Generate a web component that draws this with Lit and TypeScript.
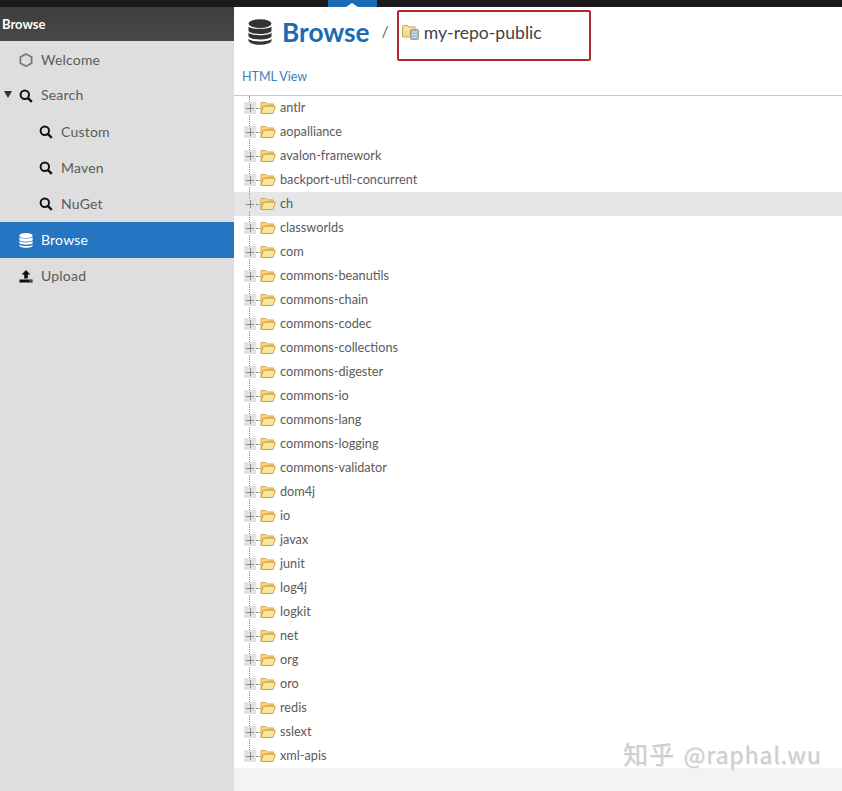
import { LitElement, html, css, svg } from "lit";
import { customElement } from "lit/decorators.js";

const FOLDERS = [
  "antlr", "aopalliance", "avalon-framework", "backport-util-concurrent", "ch",
  "classworlds", "com", "commons-beanutils", "commons-chain", "commons-codec",
  "commons-collections", "commons-digester", "commons-io", "commons-lang",
  "commons-logging", "commons-validator", "dom4j", "io", "javax", "junit",
  "log4j", "logkit", "net", "org", "oro", "redis", "sslext", "xml-apis",
];

const searchIcon = svg`<svg class="ico" viewBox="0 0 14 14" width="14" height="14">
  <circle cx="5.8" cy="5.8" r="4.2" fill="none" stroke="#111" stroke-width="2"/>
  <path d="M8.8 8.8L12.8 12.8" stroke="#111" stroke-width="2.4"/>
</svg>`;

const hexIcon = svg`<svg class="ico" viewBox="0 0 14 14" width="14" height="14">
  <path d="M7 1L12.6 4v6.2L7 13.2 1.4 10.2V4z" fill="none" stroke="#777" stroke-width="1.7"/>
</svg>`;

const dbIcon = (color: string, w: number, h: number) => svg`<svg class="ico" viewBox="0 0 24 26" width=${w} height=${h}>
  <ellipse cx="12" cy="4.6" rx="11.5" ry="4.4" fill=${color}/>
  <path d="M.5 7.4C3 10.6 21 10.6 23.500 7.400V12C21 16 3 16 .5 12z" fill=${color}/>
  <path d="M.5 14.2C3 17.800 21 17.800 23.500 14.200V18C21 22 3 22 .5 18z" fill=${color} transform="translate(0 -.6)"/>
  <path d="M.5 19.800C3 23.400 21 23.400 23.500 19.800V22C21 27 3 27 .5 22z" fill=${color}/>
</svg>`;

const uploadIcon = svg`<svg class="ico" viewBox="0 0 14 14" width="14" height="14">
  <path d="M7 1L11.400 5.400H8.800V9.500H5.200V5.400H2.600z" fill="#111"/>
  <path d="M.5 10.500H13.500V13.500H.5z" fill="#111"/>
  <path d="M10.500 11.500H12.500V12.300H10.500z" fill="#ddd"/>
</svg>`;

const folderIcon = svg`<svg class="folder" viewBox="0 0 16 14" width="16" height="14">
  <path d="M1 2.500Q1 1.500 2 1.500H6L7.500 3H13.500V5H3.500L1 12z" fill="#f8d885" stroke="#d0a543" stroke-width="1"/>
  <path d="M3.500 5.200H15.300L13 12.500H1z" fill="#fde394" stroke="#d0a543" stroke-width="1"/>
</svg>`;

const repoIcon = svg`<svg viewBox="0 0 17 16" width="17" height="16">
  <path d="M.5 2.500Q.5 1.500 1.500 1.500H5.500L7 3H13V13H.5z" fill="#f6dc8e" stroke="#cfa84f"/>
  <path d="M2.500 5H13" stroke="#fff3c4"/>
  <rect x="8.500" y="5.500" width="8" height="10" rx="1" fill="#a9b4bb" stroke="#7f8b92" stroke-width=".7"/>
  <path d="M9.800 8H15.200M9.800 10.500H15.200M9.800 13H15.200" stroke="#e8edf0" stroke-width=".9"/>
</svg>`;

@customElement("app-root")
export class AppRoot extends LitElement {
  static styles = css`
    :host {
      display: block;
      width: 842px;
      height: 791px;
      overflow: hidden;
      position: relative;
      font-family: Lato, "Liberation Sans", sans-serif;
      background: #f3f3f3;
    }
    .topbar {
      height: 7px;
      background: #1b1b1b;
      position: relative;
    }
    .tab {
      position: absolute;
      left: 328px;
      top: 0;
      width: 49px;
      height: 7px;
      background: #1a6bb3;
    }
    .tab::after {
      content: "";
      position: absolute;
      left: 18px;
      bottom: 0;
      border: 6px solid transparent;
      border-top: 0;
      border-bottom: 4px solid #fff;
    }
    .body {
      display: flex;
      height: 784px;
    }
    .side {
      width: 234px;
      flex: none;
      background: #dedede;
    }
    .side-head {
      height: 34px;
      background: linear-gradient(#3e3e3e, #484848);
      color: #fff;
      font-size: 13px;
      font-weight: 700;
      line-height: 35px;
      padding-left: 2px;
      margin-bottom: 1px;
    }
    .nav {
      display: flex;
      align-items: center;
      height: 36px;
      box-sizing: border-box;
      padding-bottom: 2px;
      font-size: 14px;
      letter-spacing: 0.2px;
      color: #5a5a5a;
      padding-left: 19px;
    }
    .nav .ico {
      margin: 2px 8px 0 0;
      flex: none;
    }
    .nav.sub {
      padding-left: 39px;
    }
    .nav.parent {
      padding-left: 4px;
      padding-bottom: 3px;
    }
    .nav.on {
      background: #2475c2;
      color: #fff;
    }
    .caret {
      width: 0;
      height: 0;
      border: 4.500px solid transparent;
      border-top: 7px solid #333;
      border-bottom: 0;
      margin-right: 7px;
    }
    .main {
      flex: 1;
      display: flex;
      flex-direction: column;
    }
    .panel {
      height: 761px;
      background: #fff;
      display: flex;
      flex-direction: column;
    }
    .title {
      height: 53px;
      box-sizing: border-box;
      display: flex;
      align-items: center;
      padding: 0 0 3px 14px;
    }
    .title h1 {
      margin: 0 0 0 10px;
      font-size: 26.200px;
      font-weight: 700;
      color: #1a6bb3;
      font-family: Lato, "Liberation Sans", sans-serif;
    }
    .slash {
      margin-left: 12px;
      color: #666;
      font-size: 16px;
      margin-bottom: 3px;
    }
    .repo {
      display: flex;
      align-items: center;
      margin-left: 13px;
      font-size: 17.600px;
      color: #444;
    }
    .repo svg {
      margin-right: 5px;
    }
    .links {
      height: 36px;
      box-sizing: border-box;
      padding: 9px 0 0 8px;
      border-bottom: 1px solid #c8c8c8;
      font-size: 12.500px;
      color: #3a80bc;
    }
    .tree {
      position: relative;
    }
    .row {
      display: flex;
      align-items: center;
      height: 24px;
      padding-left: 10px;
      font-size: 12.700px;
      color: #5a5a5a;
    }
    .row.hot {
      background: #e6e6e6;
    }
    .label {
      margin-bottom: 2px;
    }
    .plus {
      width: 12px;
      height: 12px;
      background: #e2e2e2;
      position: relative;
      flex: none;
    }
    .plus::before,
    .plus::after {
      content: "";
      position: absolute;
      background: #8a8a8a;
    }
    .plus::before {
      left: 2px;
      right: 2px;
      top: 5.500px;
      height: 1px;
    }
    .plus::after {
      top: 2px;
      bottom: 2px;
      left: 5.500px;
      width: 1px;
    }
    .dots {
      width: 4px;
      flex: none;
      border-top: 1px dotted #888;
    }
    .folder {
      flex: none;
      margin: 0 4px 1px 0;
    }
    .vline {
      position: absolute;
      left: 15px;
      top: 0;
      height: 660px;
      border-left: 1px dotted #888;
    }
    .mark {
      position: absolute;
      left: 623px;
      top: 735px;
      font-family: "Noto Sans CJK SC", "Open Sans", sans-serif;
      font-size: 25px;
      letter-spacing: 1px;
      color: #cdcdcd;
      text-shadow: 1px 1px 0 #ececec;
      white-space: nowrap;
    }
    .mark span {
      font-size: 23px;
      letter-spacing: 0.9px;
      margin-left: 2px;
    }
    .callout {
      position: absolute;
      left: 397px;
      top: 10px;
      width: 194px;
      height: 51px;
      box-sizing: border-box;
      border: 2px solid #b3282c;
      border-radius: 2px;
    }
  `;

  render() {
    return html`
      <div class="topbar"><div class="tab"></div></div>
      <div class="body">
        <aside class="side">
          <div class="side-head">Browse</div>
          <div class="nav">${hexIcon}Welcome</div>
          <div class="nav parent"><span class="caret"></span>${searchIcon}Search</div>
          <div class="nav sub">${searchIcon}Custom</div>
          <div class="nav sub">${searchIcon}Maven</div>
          <div class="nav sub">${searchIcon}NuGet</div>
          <div class="nav on">${dbIcon("#fff", 14, 15)}Browse</div>
          <div class="nav">${uploadIcon}Upload</div>
        </aside>
        <div class="main">
          <div class="panel">
            <div class="title">
              ${dbIcon("#333", 24, 26)}
              <h1>Browse</h1>
              <span class="slash">/</span>
              <span class="repo">${repoIcon}my-repo-public</span>
            </div>
            <div class="links">HTML View</div>
            <div class="tree">
              <div class="vline"></div>
              ${FOLDERS.map(
                (name) => html`<div class="row ${name === "ch" ? "hot" : ""}">
                  <span class="plus"></span><span class="dots"></span>${folderIcon}<span class="label">${name}</span>
                </div>`
              )}
            </div>
          </div>
        </div>
      </div>
      <div class="callout"></div>
      <div class="mark">知乎 <span>@raphal.wu</span></div>
    `;
  }
}
